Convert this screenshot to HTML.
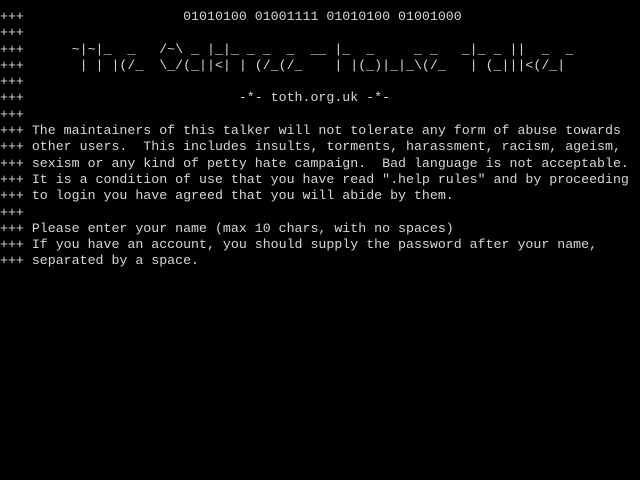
<!DOCTYPE html>
<html><head><style>
html,body{margin:0;padding:0;background:#000;width:640px;height:480px;overflow:hidden}
pre{margin:0;position:absolute;left:0;top:9px;font-family:"Liberation Mono",monospace;font-size:13.28px;line-height:16.3px;color:#d6d6d6;white-space:pre}
</style></head><body><pre>+++                    01010100 01001111 01010100 01001000
+++
+++      ~|~|_  _   /~\ _ |_|_ _ _  _  __ |_  _     _ _   _|_ _ ||  _  _
+++       | | |(/_  \_/(_||&lt;| | (/_(/_    | |(_)|_|_\(/_   | (_|||&lt;(/_|
+++
+++                           -*- toth.org.uk -*-
+++
+++ The maintainers of this talker will not tolerate any form of abuse towards
+++ other users.  This includes insults, torments, harassment, racism, ageism,
+++ sexism or any kind of petty hate campaign.  Bad language is not acceptable.
+++ It is a condition of use that you have read ".help rules" and by proceeding
+++ to login you have agreed that you will abide by them.
+++
+++ Please enter your name (max 10 chars, with no spaces)
+++ If you have an account, you should supply the password after your name,
+++ separated by a space.</pre></body></html>
